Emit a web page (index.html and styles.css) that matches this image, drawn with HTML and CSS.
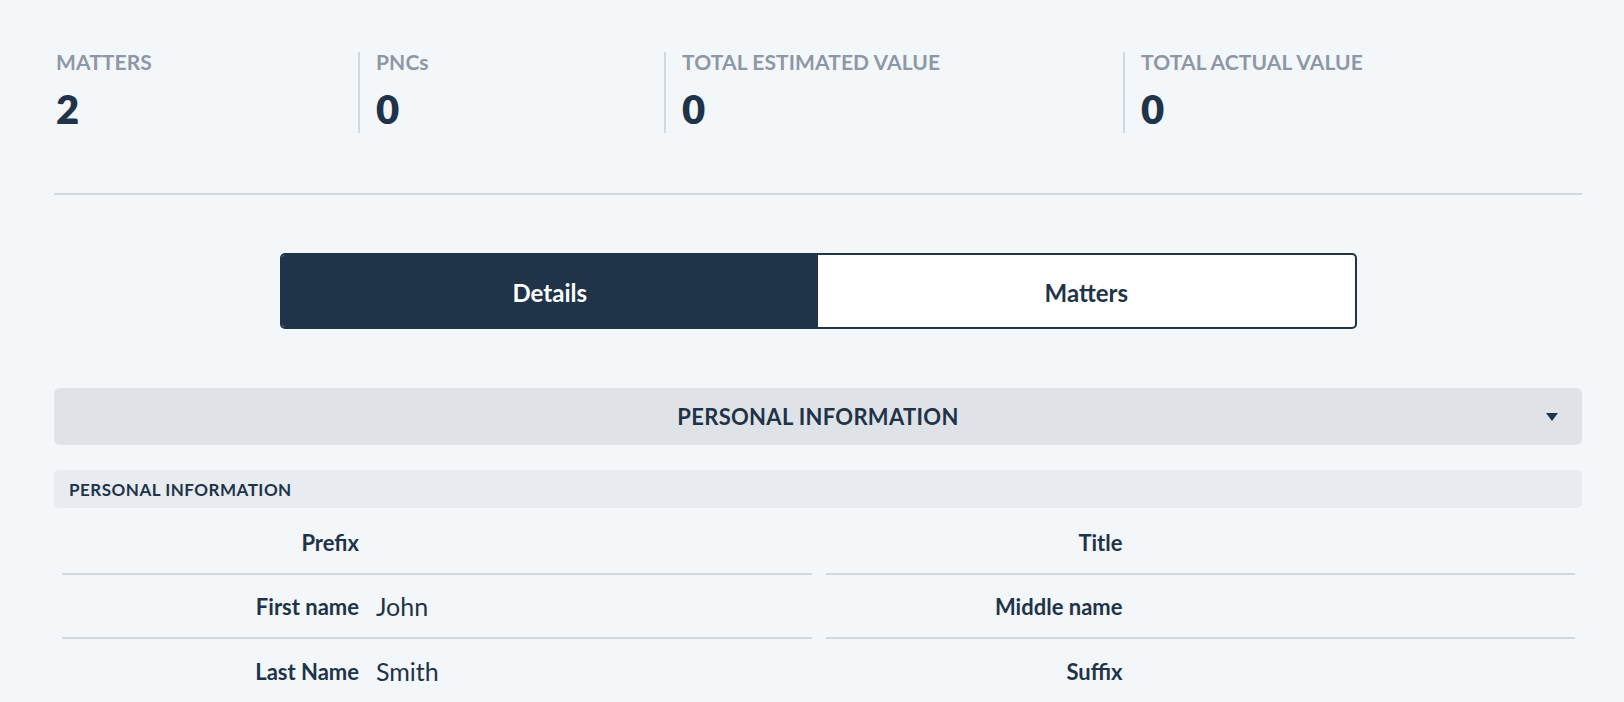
FILE: index.html
```html
<!DOCTYPE html>
<html>
<head>
<meta charset="utf-8">
<link rel="stylesheet" href="styles.css">
</head>
<body>
<div class="page">
  <div class="stats">
    <div class="stat s1"><div class="stat-label">MATTERS</div><div class="stat-value">2</div></div>
    <div class="stat s2"><div class="stat-label">PNCs</div><div class="stat-value">0</div></div>
    <div class="stat s3"><div class="stat-label">TOTAL ESTIMATED VALUE</div><div class="stat-value">0</div></div>
    <div class="stat s4"><div class="stat-label">TOTAL ACTUAL VALUE</div><div class="stat-value">0</div></div>
  </div>
  <div class="rule"></div>
  <div class="tabs">
    <div class="tab active">Details</div>
    <div class="tab">Matters</div>
  </div>
  <div class="accordion">
    <span class="acc-title">PERSONAL INFORMATION</span>
    <svg class="caret" width="14" height="10" viewBox="0 0 14 10"><path d="M1 1 L13 1 L7 9 Z" fill="#1f3349"/></svg>
  </div>
  <div class="subhead">PERSONAL INFORMATION</div>
  <div class="fields">
    <div class="row first"><div class="lbl">Prefix</div><div class="val"></div></div>
    <div class="row first"><div class="lbl">Title</div><div class="val"></div></div>
    <div class="row"><div class="lbl">First name</div><div class="val">John</div></div>
    <div class="row"><div class="lbl">Middle name</div><div class="val"></div></div>
    <div class="row last"><div class="lbl">Last Name</div><div class="val">Smith</div></div>
    <div class="row last"><div class="lbl">Suffix</div><div class="val"></div></div>
  </div>
</div>
</body>
</html>
```
FILE: styles.css
```css
html, body {
  margin: 0;
  padding: 0;
  background: #f4f7fa;
  font-family: Lato, "Noto Sans", sans-serif;
  color: #1f3349;
  overflow: hidden;
}
.page {
  padding: 52px 42px 0 54px;
}
.stats {
  display: flex;
  height: 81px;
}
.stat {
  box-sizing: border-box;
  padding-left: 16px;
  border-left: 2px solid #d3d8df;
}
.s1 { width: 304px; border-left: none; padding-left: 2px; }
.s2 { width: 306px; }
.s3 { width: 459px; }
.s4 { flex: 1; }
.stat-label {
  font-size: 21px;
  line-height: 20px;
  font-weight: 700;
  color: #8d97a6;
  letter-spacing: 0.1px;
}
.stat-value {
  margin-top: 15px;
  font-size: 40px;
  line-height: 44px;
  font-weight: 800;
  color: #1f3349;
}
.rule {
  margin-top: 60px;
  height: 2px;
  background: #d3d8df;
}
.tabs {
  margin: 58px auto 0;
  width: 1077px;
  height: 76px;
  box-sizing: border-box;
  border: 2px solid #1f3349;
  border-radius: 5px;
  display: flex;
  overflow: hidden;
  background: #ffffff;
}
.tab {
  flex: 1;
  display: flex;
  align-items: center;
  justify-content: center;
  padding-top: 3px;
  font-size: 24px;
  font-weight: 700;
  color: #1f3349;
}
.tab.active {
  background: #1f3349;
  color: #ffffff;
}
.accordion {
  margin-top: 59px;
  height: 57px;
  background: #dfe3e8;
  border-radius: 6px;
  display: flex;
  align-items: center;
  justify-content: center;
  position: relative;
}
.acc-title {
  font-size: 22px;
  font-weight: 700;
  letter-spacing: 0.3px;
  color: #1f3349;
}
.caret {
  position: absolute;
  right: 23px;
  top: 24px;
}
.subhead {
  margin-top: 25px;
  height: 38px;
  background: #e8ecf0;
  border-radius: 5px;
  display: flex;
  align-items: center;
  padding-left: 15px;
  font-size: 17px;
  font-weight: 700;
  letter-spacing: 0.5px;
  color: #1f3349;
}
.fields {
  display: grid;
  grid-template-columns: 1fr 1fr;
  column-gap: 14px;
  padding: 0 7px 0 8px;
}
.row {
  display: flex;
  align-items: center;
  height: 64px;
  box-sizing: border-box;
  border-bottom: 2px solid #d3d8df;
}
.row.first { height: 67px; padding-top: 3px; }
.row.last { border-bottom: none; }
.lbl {
  width: 297px;
  text-align: right;
  font-size: 22px;
  font-weight: 700;
  color: #1f3349;
}
.val {
  margin-left: 17px;
  font-size: 25px;
  font-weight: 400;
  color: #1f3349;
}
```
